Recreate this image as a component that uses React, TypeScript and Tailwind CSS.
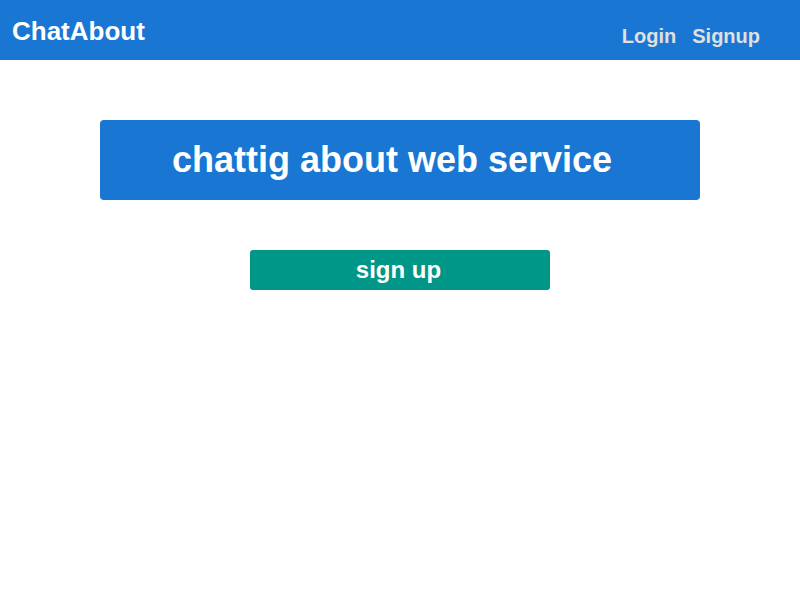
export default function App() {
  return (
    <div className="min-h-[600px] bg-white" style={{ fontFamily: '"Liberation Sans", Arial, sans-serif' }}>
      <header className="flex h-[60px] items-center justify-between bg-[#1976d2] pl-3 pr-10">
        <div className="pt-[3px] text-[26px] font-bold text-white">ChatAbout</div>
        <nav className="flex gap-4 pt-[11px] text-[20px] font-bold text-[#e0e0e0]">
          <a>Login</a>
          <a>Signup</a>
        </nav>
      </header>
      <main className="flex flex-col items-center pt-[60px]">
        <div className="flex h-[80px] w-[600px] items-center justify-center rounded-[4px] bg-[#1976d2] pr-4 text-[36px] font-bold text-white">
          chattig about web service
        </div>
        <button className="mt-[50px] flex h-[40px] w-[300px] items-center justify-center rounded-[3px] bg-[#009688] pr-[3px] text-[24px] font-bold text-white">
          sign up
        </button>
      </main>
    </div>
  );
}
